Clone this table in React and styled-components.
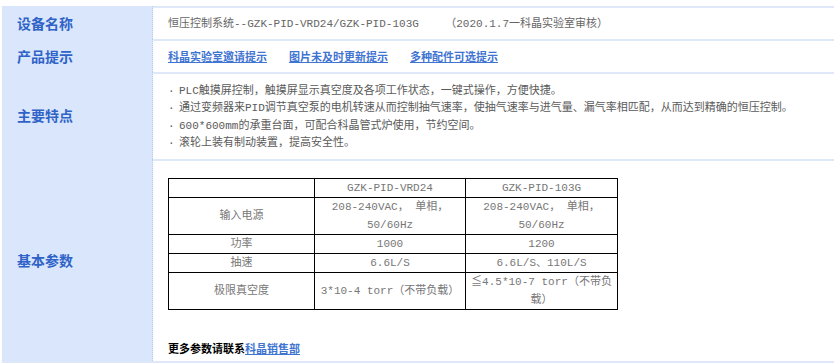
import React from "react";
import styled, { createGlobalStyle } from "styled-components";

const Global = createGlobalStyle`
  html, body { margin: 0; padding: 0; background: #fff; }
  body { overflow: hidden; }
`;

const Sheet = styled.div`
  margin: 6px 0 0 2px;
  width: calc(100% - 2px);
  border-bottom: 2px solid #dfe8f9;
  font-family: "Liberation Mono", "Noto Sans CJK SC", monospace;
  font-size: 11px;
  color: #666;
`;

const Row = styled.div`
  display: grid;
  grid-template-columns: 151px 1fr;
`;

const Label = styled.div`
  background: #dae6fc;
  border-right: 1px dotted #b8cdf0;
  display: flex;
  align-items: center;
  padding-left: 15px;
  font-family: "Noto Sans CJK SC", sans-serif;
  font-weight: 700;
  font-size: 14px;
  color: #2f63c8;
`;

const Cell = styled.div`
  border-top: 2px solid #dfe8f9;
  padding: ${(p) => p.$pad || "6px 15px"};
  line-height: ${(p) => p.$lh || "19px"};
  box-sizing: border-box;
  white-space: nowrap;
`;

const Links = styled.div`
  display: flex;
  gap: 22px;
`;

const Link = styled.a`
  color: #3f74d1;
  font-weight: 700;
  text-decoration: underline;
  font-family: "Noto Sans CJK SC", sans-serif;
  cursor: pointer;
`;

const Feature = styled.div`
  color: #5a5a5a;
  display: flex;
`;

const Dot = styled.span`
  display: inline-block;
  width: 11px;
`;

const Spec = styled.table`
  border-collapse: collapse;
  margin: 17px 0 0 0;
  color: #777;
  font-size: 11px;
  line-height: 18px;
`;

const Td = styled.td`
  border: 1px solid #000;
  text-align: center;
  padding: 0;
  width: ${(p) => p.$w}px;
  white-space: nowrap;
`;

const More = styled.div`
  margin-top: 29px;
  font-weight: 700;
  color: #000;
  line-height: 18px;
  font-family: "Noto Sans CJK SC", sans-serif;
`;

const features = [
  "PLC触摸屏控制，触摸屏显示真空度及各项工作状态，一键式操作，方便快捷。",
  "通过变频器来PID调节真空泵的电机转速从而控制抽气速率，使抽气速率与进气量、漏气率相匹配，从而达到精确的恒压控制。",
  "600*600mm的承重台面，可配合科晶管式炉使用，节约空间。",
  "滚轮上装有制动装置，提高安全性。",
];

const rows = [
  ["", "GZK-PID-VRD24", "GZK-PID-103G"],
  ["输入电源", ["208-240VAC， 单相，", "50/60Hz"], ["208-240VAC， 单相，", "50/60Hz"]],
  ["功率", "1000", "1200"],
  ["抽速", "6.6L/S", "6.6L/S、110L/S"],
  ["极限真空度", "3*10-4 torr（不带负载）", ["≦4.5*10-7 torr（不带负", "载）"]],
];

const widths = [145, 150, 151];

const render = (v) =>
  Array.isArray(v) ? (
    <>
      {v[0]}
      <br />
      {v[1]}
    </>
  ) : (
    v
  );

export default function App() {
  return (
    <>
      <Global />
      <Sheet>
        <Row>
          <Label>设备名称</Label>
          <Cell $pad="7px 15px 5px">
            恒压控制系统--GZK-PID-VRD24/GZK-PID-103G&nbsp;&nbsp;&nbsp;&nbsp;（2020.1.7一科晶实验室审核）
          </Cell>
        </Row>
        <Row>
          <Label>产品提示</Label>
          <Cell $pad="6px 15px">
            <Links>
              <Link>科晶实验室邀请提示</Link>
              <Link>图片未及时更新提示</Link>
              <Link>多种配件可选提示</Link>
            </Links>
          </Cell>
        </Row>
        <Row>
          <Label>主要特点</Label>
          <Cell $pad="9px 15px 6px" $lh="17.4px">
            {features.map((f, i) => (
              <Feature key={i}>
                <Dot>·</Dot>
                {f}
              </Feature>
            ))}
          </Cell>
        </Row>
        <Row>
          <Label>基本参数</Label>
          <Cell $pad="0 15px 4px" $lh="18px">
            <Spec>
              <tbody>
                {rows.map((r, i) => (
                  <tr key={i}>
                    {r.map((c, j) => (
                      <Td key={j} $w={widths[j]}>
                        {render(c)}
                      </Td>
                    ))}
                  </tr>
                ))}
              </tbody>
            </Spec>
            <More>
              更多参数请联系<Link>科晶销售部</Link>
            </More>
          </Cell>
        </Row>
      </Sheet>
    </>
  );
}
